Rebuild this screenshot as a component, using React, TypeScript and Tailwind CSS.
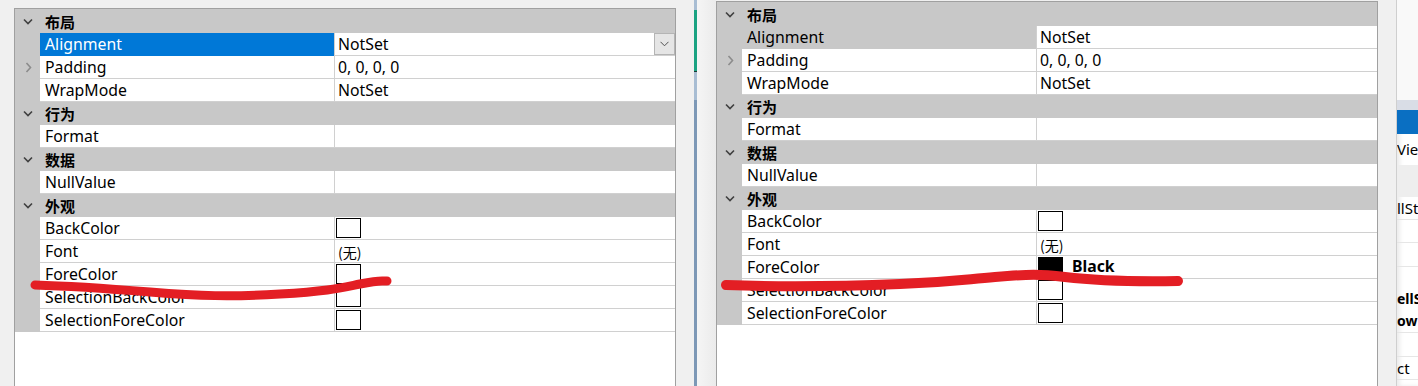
import React from "react";

type Row = {
  cat?: string;
  name?: string;
  value?: string;
  swatch?: boolean;
  expand?: boolean;
  sel?: boolean;
  fore?: boolean;
};

const rows: Row[] = [
  { cat: "布局" },
  { name: "Alignment", value: "NotSet", sel: true },
  { name: "Padding", value: "0, 0, 0, 0", expand: true },
  { name: "WrapMode", value: "NotSet" },
  { cat: "行为" },
  { name: "Format", value: "" },
  { cat: "数据" },
  { name: "NullValue", value: "" },
  { cat: "外观" },
  { name: "BackColor", swatch: true },
  { name: "Font", value: "(无)" },
  { name: "ForeColor", swatch: true, fore: true },
  { name: "SelectionBackColor", swatch: true },
  { name: "SelectionForeColor", swatch: true },
];

function ChevronDown({ color = "#404040" }: { color?: string }) {
  return (
    <svg width="10" height="7" viewBox="0 0 10 7">
      <polyline points="1,1.5 5,5.5 9,1.5" fill="none" stroke={color} strokeWidth="1.6" />
    </svg>
  );
}

function ChevronRight() {
  return (
    <svg width="7" height="11" viewBox="0 0 7 11">
      <polyline points="1.5,1 5.5,5.5 1.5,10" fill="none" stroke="#8c8c8c" strokeWidth="1.6" />
    </svg>
  );
}

function Grid({ active, black }: { active: boolean; black: boolean }) {
  return (
    <div className="flex flex-col">
      {rows.map((r, i) =>
        r.cat ? (
          <div key={i} className={i === 0 ? "flex h-[24px] pt-[1px] bg-[#c8c8c8]" : "flex h-[23px] bg-[#c8c8c8]"}>
            <div className="w-[25px] flex items-center justify-center pl-[1px]">
              <ChevronDown />
            </div>
            <div className="pl-[5px] pt-[1px] flex items-center font-bold text-[15px] font-['Noto_Sans_CJK_SC',sans-serif]">
              {r.cat}
            </div>
          </div>
        ) : (
          <div key={i} className="flex h-[23px]">
            <div className="w-[25px] bg-[#c8c8c8] flex items-center justify-center pl-[2px]">
              {r.expand && <ChevronRight />}
            </div>
            <div
              className={
                r.sel && active
                  ? "w-[294px] pl-[5px] pt-[2px] flex items-center bg-[#0078d7] text-white border-b border-[#0078d7]"
                  : r.sel
                  ? "w-[294px] pl-[5px] pt-[2px] flex items-center bg-[#c8c8c8] border-b border-[#c8c8c8]"
                  : "w-[294px] pl-[5px] pt-[2px] flex items-center bg-white border-b border-[#d0d0d0]"
              }
            >
              {r.name}
            </div>
            <div className="flex-1 flex items-center border-l border-b border-[#d0d0d0] bg-white relative">
              {r.swatch ? (
                <div className="flex items-center pl-[1px] h-full pb-[1px]">
                  <div
                    className={
                      r.fore && black
                        ? "w-[25px] h-[20px] border border-black bg-black"
                        : "w-[25px] h-[20px] border border-black bg-white"
                    }
                  />
                  {r.fore && black && <span className="ml-[9px] font-bold">Black</span>}
                </div>
              ) : (
                <span className={r.value === "(无)" ? "pl-[3px] pt-[2px] font-['Noto_Sans_CJK_SC',sans-serif] text-[14px]" : "pl-[3px] pt-[2px]"}>
                  {r.value}
                </span>
              )}
              {r.sel && active && (
                <div className="absolute right-0 top-0 w-[21px] h-[22px] bg-[#e5e5e5] border border-[#b4b4b4] flex items-center justify-center">
                  <svg width="9" height="6" viewBox="0 0 9 6">
                    <polyline points="0.5,0.8 4.5,4.8 8.5,0.8" fill="none" stroke="#505050" strokeWidth="1" />
                  </svg>
                </div>
              )}
            </div>
          </div>
        )
      )}
    </div>
  );
}

export default function App() {
  return (
    <div className="relative flex w-[1418px] h-[386px] overflow-hidden bg-[#f0f0f0] text-[15.8px] text-black font-['Noto_Sans','Noto_Sans_CJK_SC',sans-serif]">
      <div className="w-[14px] shrink-0" />
      <div className="mt-[8px] w-[662px] shrink-0 bg-white border-l border-t border-r border-[#a0a0a0]">
        <Grid active={true} black={false} />
      </div>
      <div className="w-[18px] shrink-0" />
      <div className="w-[3px] shrink-0 flex flex-col bg-[#7d98b6]">
        <div className="h-[10px] bg-[#a8bdd3]" />
        <div className="h-[62px] bg-[#1aa382] border-b border-[#1b3a33]" />
        <div className="h-[28px] bg-[#a8bdd3]" />
      </div>
      <div className="w-[19px] shrink-0 bg-gradient-to-r from-[#f5f5f5] to-[#ebebeb]" />
      <div className="mt-[1px] w-[662px] shrink-0 bg-white border-l border-t border-r border-[#a0a0a0]">
        <Grid active={false} black={true} />
      </div>
      <div className="w-[18px] shrink-0" />
      <div className="flex-1 flex flex-col overflow-hidden bg-white border-l border-[#cfcfcf] shadow-[inset_3px_0_4px_rgba(0,0,0,0.08)] text-[15px]">
        <div className="h-[100px] shrink-0 bg-[#f9f9f9]" />
        <div className="h-[10px] shrink-0 bg-[#d9dde6]" />
        <div className="h-[24px] shrink-0 bg-[#0a6fc2]" />
        <div className="h-[31px] shrink-0 flex items-center whitespace-nowrap">Vie</div>
        <div className="h-[32px] shrink-0 bg-[#eeeeee]" />
        <div className="h-[23px] shrink-0 flex items-center whitespace-nowrap border-b border-[#e6e6e6]">llSt</div>
        <div className="h-[23px] shrink-0 border-b border-[#e6e6e6]" />
        <div className="h-[24px] shrink-0 border-b border-[#e6e6e6]" />
        <div className="h-[66px] shrink-0 pt-[21px] flex flex-col whitespace-nowrap font-bold border-b border-[#e6e6e6] leading-[22px] text-[14px]">
          <span>ellS</span>
          <span>ow</span>
        </div>
        <div className="h-[24px] shrink-0 border-b border-[#e6e6e6]" />
        <div className="h-[23px] shrink-0 flex items-center whitespace-nowrap border-b border-[#e6e6e6]">ct</div>
      </div>
      <svg className="absolute inset-0 pointer-events-none" width="1418" height="386">
        <path
          d="M35 285 C 70 286, 100 288, 150 292 S 230 297, 280 294 S 340 288, 360 284 S 378 281, 387 281"
          fill="none"
          stroke="#e31e24"
          strokeWidth="9"
          strokeLinecap="round"
        />
        <path
          d="M726 285 C 780 287, 850 286, 900 284 S 960 280, 995 277 S 1040 274, 1065 277 S 1120 282, 1178 281"
          fill="none"
          stroke="#e31e24"
          strokeWidth="10"
          strokeLinecap="round"
        />
      </svg>
    </div>
  );
}
